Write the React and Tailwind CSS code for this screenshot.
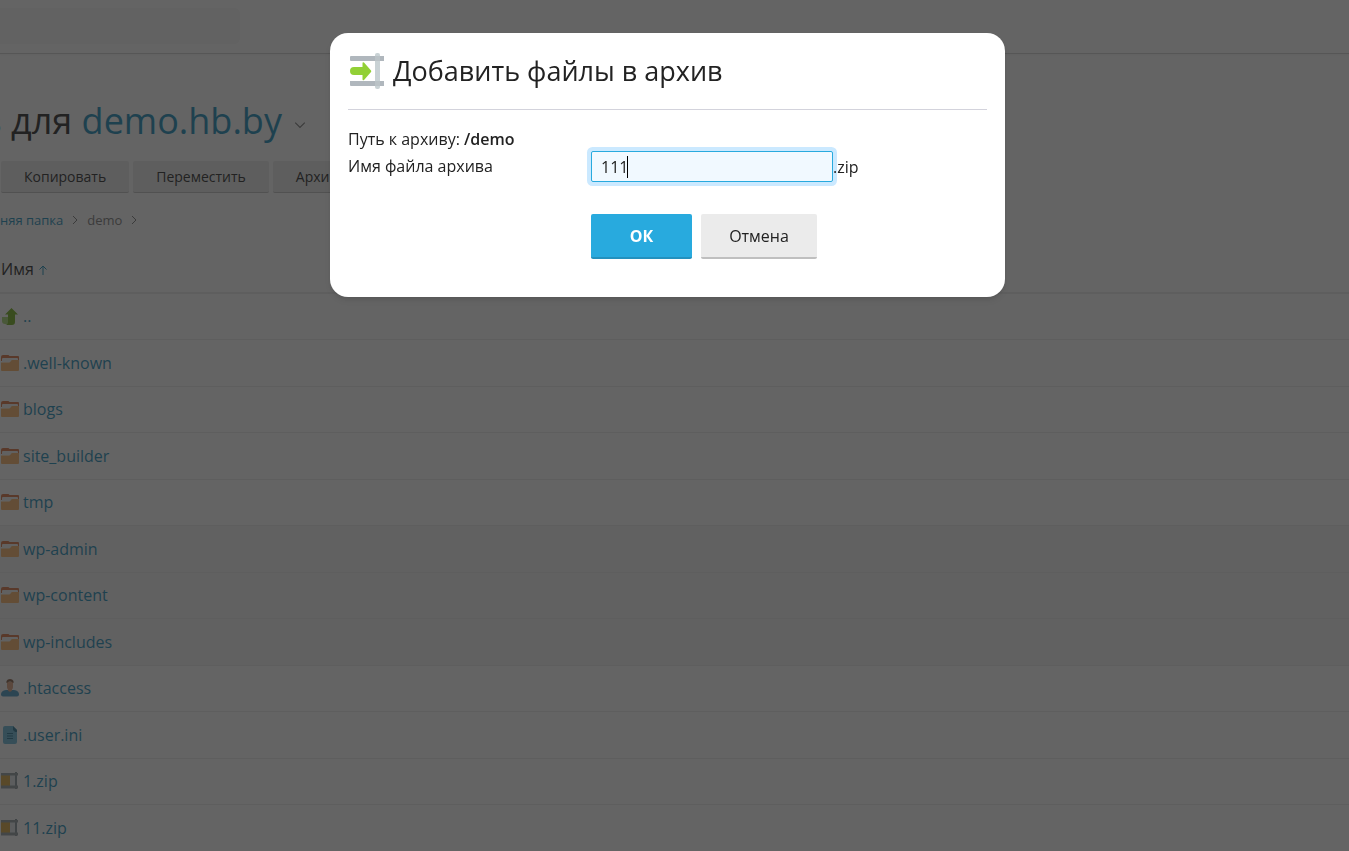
import React, { useState } from 'react'

const actions = ['Копировать', 'Переместить', 'Архивировать']

const files = [
  { name: '..', type: 'up' },
  { name: '.well-known', type: 'folder' },
  { name: 'blogs', type: 'folder' },
  { name: 'site_builder', type: 'folder' },
  { name: 'tmp', type: 'folder' },
  { name: 'wp-admin', type: 'folder', selected: true },
  { name: 'wp-content', type: 'folder', selected: true },
  { name: 'wp-includes', type: 'folder', selected: true },
  { name: '.htaccess', type: 'user' },
  { name: '.user.ini', type: 'doc' },
  { name: '1.zip', type: 'zip' },
  { name: '11.zip', type: 'zip' },
]

const Chevron = ({ className }) => (
  <svg className={className} viewBox="0 0 10 10" fill="none" stroke="currentColor" strokeWidth="1" aria-hidden="true">
    <path d="M3 1l4 4-4 4" />
  </svg>
)

const FileIcon = ({ type }) => (
  <svg className="w-5 h-5 shrink-0" viewBox="0 0 20 20" aria-hidden="true">
    {type === 'folder' && (
      <>
        <path d="M1 4a2 2 0 0 1 2-2h5q1 0 1.500 1H18a1 1 0 0 1 1 1v4H1z" fill="#d9703c" />
        <path d="M2 6a1 1 0 0 1 1-1h14a1 1 0 0 1 1 1v3H2z" fill="#f4f4f4" />
        <path d="M1 9.500h8q1 0 1.500-.8l.5-.9q.5-.8 1.500-.8H19v10a1 1 0 0 1-1 1H2a1 1 0 0 1-1-1z" fill="#fbb365" />
      </>
    )}
    {type === 'up' && (
      <>
        <path d="M2 11h6v7H5a3 3 0 0 1-3-3z" fill="#a5d86e" />
        <path d="M11.500 2L18 8.500h-3V16a3 3 0 0 1-3 3H5q3-.5 3-3V8.500H5z" fill="#6fae1a" />
      </>
    )}
    {type === 'user' && (
      <>
        <path d="M1 16.500q0-4 5-4.500h8q5 .5 5 4.500 0 2-2 2H3q-2 0-2-2z" fill="#4396c4" />
        <path d="M7 4h6v5q0 1.500-1 2.500v1q-2 2.500-4 0v-1Q7 10.500 7 9z" fill="#dfa07e" />
        <path d="M6.500 5V3q1-2 3.500-2t3.500 2v2H13q-.5-1.500-3-1.500T7 5z" fill="#81583f" />
      </>
    )}
    {type === 'doc' && (
      <>
        <path d="M3 3a2 2 0 0 1 2-2h8l4 4v12a2 2 0 0 1-2 2H5a2 2 0 0 1-2-2z" fill="#65b6d8" />
        <path d="M13 1l4 4v2h-2l-2-2z" fill="#22708f" />
        <path d="M7 8.500h6M7 11h6M7 13.500h6" stroke="#22708f" strokeWidth="1" />
      </>
    )}
    {type === 'zip' && (
      <>
        <path d="M1 4h9v11H1z" fill="#d9a63a" />
        <path d="M10 4h5v11h-5z" fill="#e3e7ea" />
        <path d="M15 1h2v17h-2z" fill="#87939b" />
        <path d="M1 2h17v2.500H1zM1 14.500h17v3H1z" fill="#929b9f" />
      </>
    )}
  </svg>
)

const ArchiveIcon = () => (
  <svg className="w-[37px] h-9 shrink-0" viewBox="0 0 37 36" aria-hidden="true">
    <path d="M3 3h33v5H3a1 1 0 0 1-1-1V4a1 1 0 0 1 1-1zM2 28h34v5H3a1 1 0 0 1-1-1z" fill="#b0b7bd" />
    <rect x="27" y="0" width="5" height="36" rx="2" fill="#c9d2d5" />
    <path d="M27 3h5v5h-5zM27 28h5v5h-5z" fill="#b0b7bd" fillOpacity="0.6" />
    <path d="M6 14h8.500v-3.500q0-2 1.500-1l7 8q.6.8 0 1.500l-7 8q-1.500 1-1.500-1V22H6a4 4 0 0 1 0-8z" fill="#92d036" />
  </svg>
)

const FileManager = () => (
  <div>
    <header className="h-[54px] border-b border-[#cfcfcf] pt-2 shadow-xs">
      <div className="w-60 h-9 rounded-r-md bg-[#f7f7f7]" />
    </header>

    <main className="pt-[42px]">
      <h1 className="flex items-center -ml-[19px] text-4xl leading-[50px] whitespace-pre">
        <a href="#sites" className="text-[#178bb8]">в</a> для <a href="#demo" className="text-[#178bb8]">demo.hb.by</a>
        <Chevron className="w-3 h-3 ml-3 mt-2 rotate-90 text-[#777]" />
      </h1>

      <div className="flex gap-1 pl-px mt-[15px]">
        {actions.map((label) => (
          <button key={label} type="button" className="h-8 px-[23px] rounded-xs bg-[#ebebeb] border-b border-[#bfbfbf] text-sm font-medium">
            {label}
          </button>
        ))}
      </div>

      <nav className="flex items-center gap-[7px] mt-[15px] text-[13px] leading-6 text-[#777]">
        <a href="#home" className="text-[#178bb8]">няя папка</a>
        <Chevron className="w-2.5 h-2.5" />
        <span>demo</span>
        <Chevron className="w-2.5 h-2.5" />
      </nav>

      <table className="w-full mt-[14px] text-base">
        <thead>
          <tr className="h-[47px] border-b-2 border-[#ececec]">
            <th className="text-left font-normal p-0 pl-px">
              <div className="flex items-center gap-1">
                Имя
                <svg className="w-2.5 h-3 mt-px" viewBox="0 0 10 12" fill="none" stroke="#178bb8" aria-hidden="true">
                  <path d="M5 11V2M1.500 5.500L5 2l3.500 3.500" />
                </svg>
              </div>
            </th>
          </tr>
        </thead>
        <tbody>
          {files.map((file) => (
            <tr
              key={file.name}
              className={`odd:h-[46px] even:h-[47px] border-b border-[#ececec] ${file.selected ? 'bg-[#f5f5f5]' : ''}`}
            >
              <td className="p-0">
                <div className="flex items-center gap-[3px]">
                  <FileIcon type={file.type} />
                  <a href="#file" className="text-[#178bb8]">{file.name}</a>
                </div>
              </td>
            </tr>
          ))}
        </tbody>
      </table>
    </main>
  </div>
)

const ArchiveDialog = () => {
  const [name, setName] = useState('111')

  return (
    <div className="fixed inset-0 flex items-start justify-center bg-[#222222]/70 pt-[33px] pr-[14px]">
      <form
        role="dialog"
        aria-labelledby="dialog-title"
        onSubmit={(e) => e.preventDefault()}
        className="w-full max-w-[675px] rounded-[18px] bg-white px-[18px] pt-5 pb-[38px] shadow-md"
      >
        <div className="flex items-center gap-2 pb-5 border-b border-[#d3d3dc]">
          <ArchiveIcon />
          <h2 id="dialog-title" className="text-[27px] leading-9">Добавить файлы в архив</h2>
        </div>

        <p className="mt-[17px] leading-6">
          Путь к архиву: <b className="font-semibold">/demo</b>
        </p>

        <div className="flex items-start">
          <label htmlFor="archive-name" className="w-[243px] leading-6 pt-[3px]">Имя файла архива</label>
          <div className="relative">
            <input
              id="archive-name"
              type="text"
              value={name}
              onChange={(e) => setName(e.target.value)}
              className="block w-[242px] h-[31px] px-[9px] rounded-xs border border-[#28aade] bg-[#f1f9ff] ring-4 ring-[#cbe9ff] outline-none"
            />
            <span className="absolute left-9 top-[5px] w-px h-[22px] bg-black" />
          </div>
          <span className="relative leading-6 pt-1">.zip</span>
        </div>

        <div className="flex gap-[9px] mt-8 ml-[243px]">
          <button type="submit" className="w-[101px] h-[45px] rounded-xs bg-[#28aade] border-b-2 border-[#2391be] text-white font-bold">
            ОК
          </button>
          <button type="button" className="w-[116px] h-[45px] rounded-xs bg-[#ebebeb] border-b-2 border-[#bfbfbf] font-medium">
            Отмена
          </button>
        </div>
      </form>
    </div>
  )
}

const App = () => (
  <div className="min-h-screen overflow-hidden bg-white text-[#222] font-['Open_Sans',sans-serif]">
    <FileManager />
    <ArchiveDialog />
  </div>
)

export default App
